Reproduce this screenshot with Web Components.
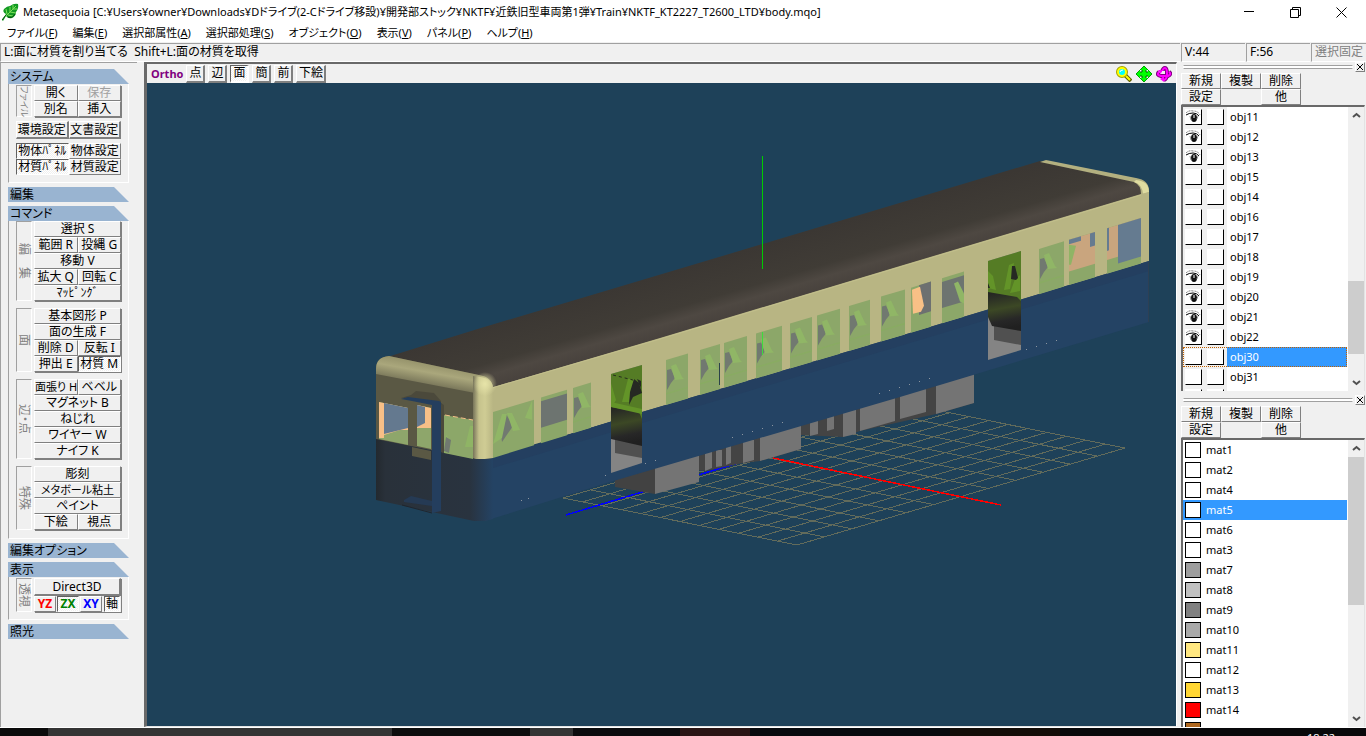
<!DOCTYPE html>
<html lang="ja">
<head>
<meta charset="utf-8">
<title>Metasequoia</title>
<style>
    html, body{
        height: 100%;
        margin: 0;
    }
    body{
        overflow: hidden;
        background: #f0f0f0;
        color: #000;
        font: 12px/14px "Noto Sans", "Noto Sans CJK JP", sans-serif;
        font-feature-settings: "palt";
    }
</style>
</head>
<body>
<meta-app></meta-app>

<script>
// registers an element whose shadow root is cloned from one template
function define(name, html, Base = class extends HTMLElement {}) {
    const tpl = document.createElement("template");
    tpl.innerHTML = html;
    customElements.define(name, class extends Base {
        constructor() {
            super();
            this.attachShadow({ mode: "open" }).append(tpl.content.cloneNode(true));
            if (this.setup) this.setup(this.shadowRoot);
        }
    });
}

define("title-bar", /* html */`
    <style>
        :host{
            display: flex;
            align-items: center;
            height: 24px;
            padding-right: 2px;
            background: #fff;
            font-size: 11px;
        }
        .leaf{
            margin: 0 4px 0 2px;
        }
        h1{
            flex: 1;
            margin: 0;
            font: inherit;
            white-space: nowrap;
        }
        button{
            width: 46px;
            height: 22px;
            padding: 0;
            border: 0;
            background: none;
        }
        svg{
            display: block;
        }
        button svg{
            margin: auto;
            fill: none;
            stroke: #000;
        }
    </style>
    <svg class="leaf" width="17" height="18" viewBox="0 0 17 18">
        <path d="M0 17L4 11Q0 9 2 6Q5 3 8 3Q12 0 16 1Q17 5 14 9Q14 13 10 15Q6 16 4 13L1 18Z" fill="#129a22"/>
        <path d="M3 14L14 3M5 11L4 6M8 9L8 4M11 6L11 2M6 12L11 13M8 9L14 10M11 6L15 6" stroke="#7ee05a" fill="none"/>
        <path d="M0 17L4 12M6 14Q10 16 13 11" stroke="#064f10" fill="none"/>
    </svg>
    <h1><slot></slot></h1>
    <button aria-label="最小化"><svg width="11" height="11"><path d="M0 4.500H10"/></svg></button>
    <button aria-label="元に戻す"><svg width="11" height="11"><path d="M.5 2.500H8.500V10.500H.5ZM2.500 2V.5H10.500V8.500H9"/></svg></button>
    <button aria-label="閉じる"><svg width="11" height="11"><path d="M.5 .5L10.500 10.500M10.500 .5L.5 10.500"/></svg></button>
`);

define("menu-bar", /* html */`
    <style>
        :host{
            display: block;
            background: #fff;
            font-size: 11px;
        }
        nav{
            display: flex;
            gap: 15px;
            height: 18px;
            align-items: center;
            padding-left: 7px;
        }
        button{
            padding: 0;
            border: 0;
            background: none;
            font: inherit;
            font-feature-settings: inherit;
            color: inherit;
            white-space: nowrap;
        }
    </style>
    <nav>
        <button>ファイル(<u>F</u>)</button>
        <button>編集(<u>E</u>)</button>
        <button>選択部属性(<u>A</u>)</button>
        <button>選択部処理(<u>S</u>)</button>
        <button>オブジェクト(<u>O</u>)</button>
        <button>表示(<u>V</u>)</button>
        <button>パネル(<u>P</u>)</button>
        <button>ヘルプ(<u>H</u>)</button>
    </nav>
`);

define("status-bar", /* html */`
    <style>
        :host{
            display: flex;
            gap: 1px;
            height: 19px;
            background: #f0f0f0;
        }
        ::slotted(span){
            box-sizing: border-box;
            width: 64px;
            padding: 1px 3px;
            border-top: 1px solid #a0a0a0;
            border-left: 1px solid #a0a0a0;
            border-bottom: 1px solid #fff;
            white-space: nowrap;
            overflow: hidden;
        }
        ::slotted(.message){
            flex: 1;
        }
        ::slotted(.lock){
            width: 55px;
            color: #808080;
        }
    </style>
    <slot></slot>
`);

define("tool-button", /* html */`
    <style>
        :host{
            display: flex;
            flex: 1 1 0;
            min-width: 0;
        }
        button{
            flex: 1;
            min-width: 0;
            height: 16px;
            padding: 0;
            border: 1px solid;
            border-color: #fff #808080 #808080 #fff;
            background: #f0f0f0;
            font: inherit;
            font-feature-settings: inherit;
            line-height: 14px;
            color: inherit;
            white-space: nowrap;
            overflow: hidden;
        }
        :host([tall]) button{
            height: 18px;
            border-right-width: 2px;
            border-bottom-width: 2px;
        }
        :host([pressed]) button{
            border-color: #606060 #fff #fff #606060;
            background: repeating-conic-gradient(#fff 0 25%, #f0f0f0 0 50%) 0 0 / 2px 2px;
        }
        :host([disabled]) button{
            color: #a0a0a0;
        }
    </style>
    <button><slot></slot></button>
`, class extends HTMLElement {
    setup(root) {
        this.button = root.querySelector("button");
    }
    connectedCallback() {
        this.button.disabled = this.hasAttribute("disabled");
        if (this.hasAttribute("pressed")) this.button.setAttribute("aria-pressed", "true");
    }
});

define("tool-row", /* html */`
    <style>
        :host{
            display: flex;
        }
    </style>
    <slot></slot>
`);

// rows of buttons with a caption turned on its side
define("tool-group", /* html */`
    <style>
        :host{
            display: flex;
            gap: 2px;
        }
        .caption{
            contain: size;
            box-sizing: border-box;
            width: 16px;
            border: 1px solid;
            border-color: #a0a0a0 #fff #fff #a0a0a0;
            writing-mode: vertical-rl;
            text-orientation: sideways;
            text-align: center;
            line-height: 14px;
            color: #808080;
            white-space: pre;
        }
        :host([small]) .caption{
            font-size: 9px;
        }
        .rows{
            flex: 1;
            min-width: 0;
            box-shadow: 1px 1px #808080;
        }
    </style>
    <div class="caption"></div>
    <div class="rows"><slot></slot></div>
`, class extends HTMLElement {
    setup(root) {
        this.caption = root.querySelector(".caption");
    }
    connectedCallback() {
        this.caption.textContent = this.getAttribute("caption");
    }
});

define("tool-section", /* html */`
    <style>
        :host{
            display: block;
            width: 121px;
            margin-bottom: 4px;
        }
        h2{
            height: 15px;
            margin: 0;
            padding-left: 2px;
            background: #99b4d1;
            clip-path: polygon(0 0, 106px 0, 100% 100%, 0 100%);
            font: inherit;
            line-height: 15px;
        }
        .body{
            display: flex;
            flex-direction: column;
            gap: 7px;
            padding: 0 7px 8px;
            border-left: 1px solid #a0a0a0;
            border-right: 1px solid #fff;
            border-bottom: 1px solid #fff;
        }
        :host([closed]) .body{
            display: none;
        }
        :host([tight]) .body{
            gap: 4px;
            padding-top: 1px;
            padding-bottom: 7px;
        }
    </style>
    <h2></h2>
    <div class="body"><slot></slot></div>
`, class extends HTMLElement {
    setup(root) {
        this.heading = root.querySelector("h2");
    }
    connectedCallback() {
        this.heading.textContent = this.getAttribute("heading");
    }
});

define("command-panel", /* html */`
    <style>
        :host{
            display: block;
            box-sizing: border-box;
            width: 137px;
            padding: 6px 0 0 7px;
            border-top: 1px solid #a0a0a0;
            border-left: 1px solid #a0a0a0;
            overflow: hidden;
        }
        .fit{
            font-size: 11px;
        }
        .axes{
            display: flex;
            gap: 1px;
            font-weight: bold;
        }
        .axes tool-button{
            flex: 0 0 22px;
        }
        .axes .axis{
            flex: 0 0 16px;
            margin-left: 1px;
            font-weight: normal;
        }
        .yz{ color: #f00; }
        .zx{ color: #008000; }
        .xy{ color: #00f; }
    </style>
    <tool-section heading="システム" tight>
        <tool-group caption="ファイル" small>
            <tool-row><tool-button>開く</tool-button><tool-button disabled>保存</tool-button></tool-row>
            <tool-row><tool-button>別名</tool-button><tool-button>挿入</tool-button></tool-row>
        </tool-group>
        <tool-row><tool-button tall>環境設定</tool-button><tool-button tall>文書設定</tool-button></tool-row>
        <div>
            <tool-row><tool-button pressed>物体ﾊﾟﾈﾙ</tool-button><tool-button>物体設定</tool-button></tool-row>
            <tool-row><tool-button pressed>材質ﾊﾟﾈﾙ</tool-button><tool-button>材質設定</tool-button></tool-row>
        </div>
    </tool-section>
    <tool-section heading="編集" closed></tool-section>
    <tool-section heading="コマンド">
        <tool-group caption="編　集">
            <tool-row><tool-button>選択 S</tool-button></tool-row>
            <tool-row><tool-button>範囲 R</tool-button><tool-button>投縄 G</tool-button></tool-row>
            <tool-row><tool-button>移動 V</tool-button></tool-row>
            <tool-row><tool-button>拡大 Q</tool-button><tool-button>回転 C</tool-button></tool-row>
            <tool-row><tool-button>ﾏｯﾋﾟﾝｸﾞ</tool-button></tool-row>
        </tool-group>
        <tool-group caption="面">
            <tool-row><tool-button>基本図形 P</tool-button></tool-row>
            <tool-row><tool-button>面の生成 F</tool-button></tool-row>
            <tool-row><tool-button>削除 D</tool-button><tool-button>反転 I</tool-button></tool-row>
            <tool-row><tool-button>押出 E</tool-button><tool-button pressed>材質 M</tool-button></tool-row>
        </tool-group>
        <tool-group caption="辺・点">
            <tool-row><tool-button class="fit">面張り H</tool-button><tool-button>ベベル</tool-button></tool-row>
            <tool-row><tool-button>マグネット B</tool-button></tool-row>
            <tool-row><tool-button>ねじれ</tool-button></tool-row>
            <tool-row><tool-button>ワイヤー W</tool-button></tool-row>
            <tool-row><tool-button>ナイフ K</tool-button></tool-row>
        </tool-group>
        <tool-group caption="特殊">
            <tool-row><tool-button>彫刻</tool-button></tool-row>
            <tool-row><tool-button class="fit">メタボール粘土</tool-button></tool-row>
            <tool-row><tool-button>ペイント</tool-button></tool-row>
            <tool-row><tool-button>下絵</tool-button><tool-button>視点</tool-button></tool-row>
        </tool-group>
    </tool-section>
    <tool-section heading="編集オプション" closed></tool-section>
    <tool-section heading="表示" tight>
        <tool-group caption="透視">
            <tool-row><tool-button tall>Direct3D</tool-button></tool-row>
            <div class="axes">
                <tool-button class="yz">YZ</tool-button><tool-button class="zx" pressed>ZX</tool-button><tool-button class="xy">XY</tool-button><tool-button class="axis" pressed>軸</tool-button>
            </div>
        </tool-group>
    </tool-section>
    <tool-section heading="照光" closed></tool-section>
`);

define("view-toolbar", /* html */`
    <style>
        :host{
            display: flex;
            align-items: center;
            gap: 3px;
            height: 19px;
            padding: 0 4px;
            background: #f0f0f0;
        }
        b{
            color: #800080;
            font-size: 11px;
        }
        tool-button{
            flex: 0 0 19px;
        }
        .wide{
            flex-basis: 30px;
        }
        .icons{
            display: flex;
            gap: 4px;
            margin-left: auto;
        }
        .icons button{
            display: block;
            padding: 0;
            border: 0;
            background: none;
        }
        svg{
            display: block;
        }
    </style>
    <b>Ortho</b>
    <tool-button tall>点</tool-button>
    <tool-button tall>辺</tool-button>
    <tool-button tall pressed>面</tool-button>
    <tool-button tall>簡</tool-button>
    <tool-button tall>前</tool-button>
    <tool-button tall class="wide">下絵</tool-button>
    <div class="icons">
        <button aria-label="拡大"><svg width="16" height="16">
            <path d="M9 9L15 15" stroke="#606000" stroke-width="4"/>
            <path d="M9 9L14 14" stroke="#ff0" stroke-width="2"/>
            <circle cx="6" cy="6" r="5" fill="#0ff" stroke="#a0a000" stroke-width="2"/>
            <circle cx="6" cy="6" r="4" fill="none" stroke="#ff0" stroke-width="2"/>
            <path d="M4 6Q4 4 7 4" stroke="#fff" fill="none"/>
        </svg></button>
        <button aria-label="移動"><svg width="16" height="16">
            <path d="M8 0L16 8L8 16L0 8Z" fill="#0f0" stroke="#00a000"/>
            <path d="M4 4H6V6H4ZM10 4H12V6H10ZM4 10H6V12H4ZM10 10H12V12H10Z" fill="#efe"/>
            <path d="M6 4V6H4M10 4V6H12M4 10H6V12M12 10H10V12" stroke="#006000" fill="none"/>
        </svg></button>
        <button aria-label="回転"><svg width="16" height="16" fill="none">
            <path d="M8 14Q11 13 11 8Q11 2 9 2Q7 2 6 6M3 6Q0 9 5 10H12Q16 8 13 6" stroke="#800080" stroke-width="4"/>
            <path d="M8 14Q11 13 11 8Q11 2 9 2Q7 2 6 6M3 6Q0 9 5 10H12Q16 8 13 6" stroke="#f0f" stroke-width="2"/>
            <path d="M4 13L8 10V16ZM2 4L6 4L5 8Z" fill="#f0f"/>
            <path d="M6 5V8H9V5Z" fill="#f0f0f0"/>
        </svg></button>
    </div>
`);

// the railway car, drawn in window coordinates so that its parts line up
define("scene-view", /* html */`
    <style>
        :host{
            display: block;
            flex: 1;
            min-height: 0;
            background: #1e4159;
        }
        svg{
            display: block;
            width: 100%;
            height: 100%;
        }
    </style>
    <svg viewBox="147 83 1029 643" preserveAspectRatio="xMidYMid slice" role="img" aria-label="body.mqo">
        <defs>
            <linearGradient id="roof" gradientUnits="userSpaceOnUse" x1="700" y1="263" x2="717" y2="321">
                <stop offset="0" stop-color="#3b3733"/><stop offset=".6" stop-color="#403c36"/>
                <stop offset=".8" stop-color="#4e4842"/><stop offset="1" stop-color="#48423d"/>
            </linearGradient>
            <linearGradient id="brow" gradientUnits="userSpaceOnUse" x1="430" y1="364" x2="425" y2="392">
                <stop offset="0" stop-color="#97946c"/><stop offset=".3" stop-color="#aaa77c"/>
                <stop offset="1" stop-color="#5a5844"/>
            </linearGradient>
            <linearGradient id="post">
                <stop offset="0" stop-color="#77745a"/><stop offset=".3" stop-color="#c6c38d"/>
                <stop offset=".6" stop-color="#cfcc94"/><stop offset="1" stop-color="#b8b583"/>
            </linearGradient>
            <radialGradient id="corner"><stop offset="0" stop-color="#e6e3a8"/><stop offset="1" stop-color="#e6e3a8" stop-opacity="0"/></radialGradient>
            <linearGradient id="nose"><stop offset="0" stop-color="#23292f"/><stop offset=".08" stop-color="#29313a"/>
                <stop offset=".8" stop-color="#29333f"/><stop offset="1" stop-color="#244364"/></linearGradient>
            <linearGradient id="dark" x2=".15" y2="1"><stop offset="0" stop-color="#202020"/><stop offset=".2" stop-color="#2a2d25"/>
                <stop offset=".5" stop-color="#3c4825"/><stop offset=".8" stop-color="#272727"/><stop offset="1" stop-color="#202020"/></linearGradient>
        </defs>
        <g id="grid" stroke="#626b5b" shape-rendering="crispEdges"></g>
        <path d="M566 515L738 463" stroke="#00f" stroke-width="1.500" shape-rendering="crispEdges"/>
        <path d="M773 458L1001 505" stroke="#f00" stroke-width="1.500" shape-rendering="crispEdges"/>

        <!-- underfloor boxes -->
        <path d="M615 480L655 462V494L615 487Z" fill="#424242"/>
        <path d="M655 462L699 450V482L655 494Z" fill="#747474"/>
        <path d="M699 455L801 425V449L760 461L743 463L705 471L699 470Z" fill="#444"/>
        <path d="M705 450H712V468L705 471ZM716 450H722V466L716 467ZM726 445H731V463L726 465ZM743 440H754V460L743 463ZM760 436L801 425V449L760 461Z" fill="#747474"/>
        <path d="M801 423L974 370V403L936 414L860 431L843 437L801 435Z" fill="#444"/>
        <path d="M810 420H818V434L810 436ZM827 415H834V429L827 431ZM843 410L856 406V434L843 437ZM860 405L895 395V421L860 431ZM900 395L926 385V412L900 419ZM936 380L974 370V403L936 414Z" fill="#747474"/>

        <!-- roof and long side -->
        <path d="M384 358L476 329.500L776 240L1040 161L1137 182L1146 195L900 268L660 340L490 389Z" fill="url(#roof)"/>
        <path d="M1040 162L1046 160L1136 178Q1149 180 1149 191V230H1141V194Q1141 185 1134 182Z" fill="#b3b080"/>
        <path d="M1136 180Q1149 181 1149 192L1143 194Q1142 184 1134 182Z" fill="#dfdca0"/>
        <path d="M490 388L660 338L900 266L1141 194L1149 192V262L900 337L642 413L480 460Z" fill="#b8b583"/>
        <path d="M492 388L660 339L900 267L1141 195" stroke="#c2bf8c" fill="none"/>
        <path d="M475 459L493 458L642 412L900 336L1149 261V322L900 397L610 482L485 521H474Z" fill="#244364"/>
        <path d="M493 458L642 412L900 336L1149 261V271L900 346L642 423L493 468Z" fill="#243f60"/>
        <path d="M1148.500 262V322" stroke="#2d4054"/>
        <g id="bolts" fill="#8b95a0"></g>
        <g id="windows"></g>

        <!-- doorways -->
        <g>
            <path d="M611 374L642 365V463L611 473Z" fill="#848484"/>
            <path d="M615 436L642 441V458L615 453Z" fill="#505050"/>
            <path d="M611 404L642 409V446L611 439Z" fill="url(#dark)"/>
            <path d="M611 374L642 365V419L639 412L611 407Z" fill="#557c25"/>
            <path d="M611 383L616 400L613 405H611ZM628 379H634L629 402H622ZM611 402L642 409V414L611 407Z" fill="#639428"/>
            <path d="M634 379L639 383L642 393L633 397L629 405L630 392ZM637 379L641 381V388Z" fill="#262923"/>
            <path d="M613 375L633 380" stroke="#252c1d" stroke-dasharray="3 3"/>
        </g>
        <g>
            <path d="M988 261L1021 251V350L988 360Z" fill="#848484"/>
            <path d="M988 300L994 324V340L1021 345V326Z" fill="#505050"/>
            <path d="M988 290L1021 297V331L992 326L988 317Z" fill="url(#dark)"/>
            <path d="M988 261L1021 251V301L1017 297L988 292Z" fill="#557c25"/>
            <path d="M988 271L993 276L996 290L988 288ZM1009 265L1014 263L1010 289L1004 290ZM1015 279L1020 275V291L1010 293Z" fill="#639428"/>
            <path d="M1012 266L1015 266L1018 278L1016 280L1011 279ZM988 283L990 288H988Z" fill="#262923"/>
        </g>

        <!-- front end -->
        <path d="M376 369Q376 357 389 356L479 375Q492 377 493 388V458L475 460L376 440Z" fill="#5a5844"/>
        <path d="M376 369Q376 357 389 356L479 375Q492 377 493 388L475 393L376 374Z" fill="url(#brow)"/>
        <path d="M473 376Q493 377 493 388V458L476 460L473 458Z" fill="url(#post)"/>
        <ellipse cx="485" cy="384" rx="12" ry="12" fill="url(#corner)"/>
        <path d="M376 439L476 459H493V519L485 521L474 521L376 500Z" fill="url(#nose)"/>
        <path d="M379 402L408 408V445L379 439Z" fill="#8ea66b"/>
        <path d="M379 402L408 408V430L400 430L384 435V438L379 438Z" fill="#f7bf87"/>
        <path d="M384 403L408 408V428L400 430L384 434Z" fill="#64798f"/>
        <path d="M417 405L431 408V449L417 446Z" fill="#8ea66b"/>
        <path d="M417 405L431 408V428H417Z" fill="#f7bf87"/>
        <path d="M417 405L425 407V423L417 427Z" fill="#64798f"/>
        <path d="M444 415L473 420V459L444 453Z" fill="#8ca769"/>
        <path d="M446 435L450 440L449 453L444 452ZM470 426H473V447L465 447Z" fill="#8fb465"/>
        <path d="M446 437L451 440L449 453L444 451Z" fill="#717970"/>
        <path d="M445 415L473 420" stroke="#f7bf87" stroke-dasharray="5 3"/>
        <path d="M412 447L431 451V460L412 456Z" fill="#5a5844"/>
        <path d="M411 395L416 391L434 393L441 401V403L401 398Z" fill="#4b493b"/>
        <path d="M441 403L444 405V453L441 452Z" fill="#4b493b"/>
        <path d="M401 399L408 397L439 401Q442 402 441 405V511L432 513V405L412 401Z" fill="#243e5e"/>
        <path d="M404 500L411 496L432 501V506L404 502Z" fill="#253a54"/>
        <path d="M402 505L432 513" stroke="#20262e"/>

        <path d="M762.500 156V269" stroke="#0c0" shape-rendering="crispEdges"/>
        <path d="M762.500 332V355" stroke="#3ddc3d" shape-rendering="crispEdges"/>
        <path d="M719.500 363V385" stroke="#2a4248"/>
    </svg>
`, class extends HTMLElement {
    setup(root) {
        const L = [563, 498], B = [797, 545], T = [891, 401], n = 12;
        let lines = "";
        for (let i = 0; i <= n; i++) {
            const k = i / n;
            const a = [(B[0] - L[0]) * k, (B[1] - L[1]) * k];
            const b = [(T[0] - L[0]) * k, (T[1] - L[1]) * k];
            lines += `M${L[0] + a[0]} ${L[1] + a[1]}L${T[0] + a[0]} ${T[1] + a[1]}`;
            lines += `M${L[0] + b[0]} ${L[1] + b[1]}L${B[0] + b[0]} ${B[1] + b[1]}`;
        }
        root.querySelector("#grid").innerHTML = `<path d="${lines}"/>`;

        const bolts = [[491, 509], [521, 500], [528, 498], [605, 475], [645, 463], [655, 460], [732, 437],
            [742, 434], [752, 431], [762, 428], [772, 425], [782, 422], [879, 393], [889, 390], [899, 387],
            [909, 384], [919, 381], [929, 378], [1026, 349], [1036, 346], [1046, 343], [1056, 340]];
        root.querySelector("#bolts").innerHTML = bolts.map(([x, y]) =>
            `<rect x="${x}" y="${y}" width="1" height="1"/>`).join("");

        // upper and lower window lines run along the car side
        const along = (pts, x) => {
            let i = 1;
            while (i < pts.length - 1 && pts[i][0] < x) i++;
            const [p, q] = [pts[i - 1], pts[i]];
            return p[1] + (q[1] - p[1]) * (x - p[0]) / (q[0] - p[0]);
        };
        const top = x => along([[493, 412], [666, 360], [900, 291], [1141, 218]], x);
        const sill = x => along([[493, 458], [642, 412], [900, 336], [1149, 261]], x);
        const panes = [[493, 534, "long"], [541, 567, "wall"], [573, 591], [666, 688], [700, 720], [724, 747], [756, 782],
            [790, 812], [817, 840], [849, 870], [881, 905], [911, 931, "sun"], [942, 964, "wall"],
            [1039, 1064], [1069, 1095, "end"], [1107, 1141, "end"]];
        let out = "";
        for (const [l, r, kind] of panes) {
            const t = top(l), u = top(r);
            const quad = (a, b, y1, y2, fill) => {
                const h = x => sill(x) - top(x);
                return `<path fill="${fill}" d="M${a} ${top(a) + h(a) * y1}L${b} ${top(b) + h(b) * y1}V${top(b) + h(b) * y2}L${a} ${top(a) + h(a) * y2}Z"/>`;
            };
            out += quad(l, r, 0, 1, "#8ca769");
            if (kind === "end") {
                out += quad(l, r, 0, .7, "#c9a57e");
                out += l > 1100 ? quad(l + 11, r, 0, .85, "#657b90") + quad(l, l + 2, 0, .5, "#657b90")
                    : quad(l, l + 12, 0, .1, "#657b90") + quad(r - 5, r, 0, .3, "#657b90");
                if (l < 1100) out += `<path fill="#8fb465" d="M${l} ${t + 5}L${l + 7} ${t + 6}L${l + 2} ${t + 25}H${l}Z"/>`;
                continue;
            }
            if (kind === "sun") {
                out += quad(l + 8, r, 0, .66, "#6d7070");
                out += `<path fill="#f9c086" d="M${l + 1} ${t + 2}L${l + 9} ${t - 1}L${l + 13} ${t + 18}L${l + 10} ${t + 24}L${l + 2} ${t + 26}Z"/>`;
                continue;
            }
            if (kind === "wall") {
                out += quad(l, r, .08, .66, "#6d7470");
                if (l > 900) out += `<path fill="#90b666" d="M${r - 10} ${u + 12}L${r - 6} ${u + 10}L${r} ${u + 22}V${u + 32}L${r - 4} ${u + 30}Z"/>`;
                continue;
            }
            if (kind === "long") {
                out += `<path fill="#717970" d="M${l + 13} ${t + 2}L${l + 20} ${t + 14}L${l + 9} ${t + 30}L${l + 8} ${t + 22}Z"/>`;
                out += `<path fill="#90b666" d="M${l} ${t + 32}L${l + 9} ${t + 2}H${l + 14}L${l + 9} ${t + 26}ZM${l + 14} ${t + 1}H${l + 19}L${l + 27} ${t + 18}L${l + 20} ${t + 19}ZM${r - 9} ${u + 18}L${r - 2} ${u + 1}V${u + 20}Z"/>`;
                continue;
            }
            // seat in shade with the lit back of the next one
            out += `<path fill="#717970" d="M${l + 1} ${t + 10}L${l + 5} ${t + 9}L${l + 9} ${t + 18}L${l + 5} ${t + 23}L${l + 1} ${t + 30}Z"/>`;
            out += `<path fill="#90b666" d="M${l + 5} ${t + 6}L${l + 10} ${t + 4}L${l + 16} ${t + 17}L${Math.min(l + 18, r)} ${t + 19}L${l + 9} ${t + 20}Z"/>`;
            out += quad(l, r, .74, .77, "#89ac62");
        }
        root.querySelector("#windows").innerHTML = out;
    }
});

define("scroll-bar", /* html */`
    <style>
        :host{
            display: flex;
            flex-direction: column;
            width: 16px;
            background: #f0f0f0;
        }
        button{
            height: 17px;
            padding: 0;
            border: 0;
            background: none;
        }
        svg{
            display: block;
            margin: auto;
            fill: none;
            stroke: #505050;
            stroke-width: 2;
        }
        .track{
            display: flex;
            flex: 1;
            flex-direction: column;
        }
        .before{
            flex: var(--before, 0) 0 0;
        }
        .thumb{
            flex: var(--thumb, 1) 0 0;
            background: #cdcdcd;
        }
        .after{
            flex: var(--after, 1) 0 0;
        }
    </style>
    <button aria-label="上へ"><svg width="9" height="7"><path d="M1 5L4.500 2L8 5"/></svg></button>
    <div class="track"><div class="before"></div><div class="thumb"></div><div class="after"></div></div>
    <button aria-label="下へ"><svg width="9" height="7"><path d="M1 2L4.500 5L8 2"/></svg></button>
`);

define("object-row", /* html */`
    <style>
        :host{
            display: flex;
            height: 20px;
        }
        .checks{
            display: flex;
            gap: 5px;
            width: 42px;
            padding: 2px 0 0 2px;
            background: #f0f0f0;
        }
        label{
            display: grid;
            width: 17px;
            height: 16px;
        }
        input, svg{
            grid-area: 1 / 1;
        }
        input{
            appearance: none;
            width: 17px;
            height: 16px;
            margin: 0;
            background: #fff;
            border: 1px solid;
            border-color: #fff #000 #000 #fff;
        }
        svg{
            visibility: hidden;
        }
        input:checked + svg{
            visibility: visible;
        }
        .name{
            flex: 1;
            padding-left: 3px;
            line-height: 20px;
        }
        :host([selected]){
            outline: 1px dotted #c06000;
            outline-offset: -1px;
        }
        :host([selected]) .name{
            background: #39f;
            color: #fff;
        }
    </style>
    <div class="checks">
        <label><input type="checkbox" class="shown" aria-label="表示">
            <svg width="16" height="15">
                <path d="M1 4Q4 1 8 2Q13 2 15 6" fill="none" stroke="#777" stroke-dasharray="2 1"/>
                <path d="M1 6Q4 4 8 4Q12 4 14 7" fill="none" stroke="#000"/>
                <ellipse cx="9" cy="9" rx="3" ry="4" fill="#111"/>
                <path d="M9 6V9" stroke="#fff"/>
                <path d="M5 7L6 11M13 7L12 10" stroke="#999"/>
            </svg>
        </label>
        <label><input type="checkbox" aria-label="ロック"></label>
    </div>
    <div class="name"><slot></slot></div>
`, class extends HTMLElement {
    connectedCallback() {
        this.shadowRoot.querySelector(".shown").checked = this.hasAttribute("shown");
    }
});

define("material-row", /* html */`
    <style>
        :host{
            display: flex;
            align-items: center;
            gap: 5px;
            height: 20px;
            padding-left: 2px;
        }
        .swatch{
            box-sizing: border-box;
            width: 16px;
            height: 16px;
            border: 1px solid #000;
            background: var(--swatch, #fff);
        }
        :host([selected]){
            background: #39f;
            color: #fff;
        }
    </style>
    <div class="swatch"></div>
    <slot></slot>
`);

define("list-panel", /* html */`
    <style>
        :host{
            display: flex;
            flex-direction: column;
            min-height: 0;
            font-size: 11px;
        }
        .grip{
            display: flex;
            align-items: center;
            gap: 2px;
            height: 10px;
            padding: 0 1px 0 2px;
        }
        .bars{
            flex: 1;
            height: 2px;
            border: 1px solid;
            border-color: #a0a0a0 #fff;
            background: #fff;
        }
        .grip button{
            width: 10px;
            height: 10px;
            padding: 0;
            border: 1px solid;
            border-color: #fff #808080 #808080 #fff;
            background: #f0f0f0;
        }
        svg{
            display: block;
        }
        .tools{
            display: grid;
            grid-template-columns: repeat(3, 40px);
            padding-top: 1px;
            font-size: 12px;
        }
        .last{
            grid-column: 3;
        }
        .frame{
            display: flex;
            flex: 1;
            min-height: 0;
            margin-right: 1px;
            border: solid #696969;
            border-width: 2px 1px 0 2px;
            border-right-color: #e3e3e3;
            background: #fff;
        }
        .rows{
            flex: 1;
            margin-right: 1px;
            overflow: hidden;
        }
    </style>
    <div class="grip"><div class="bars"></div><button aria-label="閉じる"><svg width="8" height="8"><path d="M1 1L7 7M7 1L1 7" stroke="#000"/></svg></button></div>
    <div class="tools">
        <tool-button>新規</tool-button>
        <tool-button>複製</tool-button>
        <tool-button>削除</tool-button>
        <tool-button>設定</tool-button>
        <tool-button class="last">他</tool-button>
    </div>
    <div class="frame">
        <div class="rows"><slot></slot></div>
        <scroll-bar></scroll-bar>
    </div>
`);

define("task-bar", /* html */`
    <style>
        :host{
            display: flex;
            justify-content: flex-end;
            box-sizing: border-box;
            height: 9px;
            padding: 3px 31px 0 0;
            overflow: hidden;
            border-top: 1px solid #fff;
            background: linear-gradient(90deg, #0b0b0b 48px, #343434 0 392px, #0d0d0d 0 530px, #343434 0 573px, #0b0b0d 0 680px, #2a1414 0 750px, #07090d 0 950px, #140d08 0 1060px, #08080a 0);
            color: #fff;
            font-size: 11px;
        }
    </style>
    <span>18:22</span>
`);

define("meta-app", /* html */`
    <style>
        :host{
            display: flex;
            flex-direction: column;
            height: 100%;
        }
        title-bar, menu-bar, status-bar, task-bar{
            flex: none;
        }
        menu-bar{
            border-bottom: 1px solid #f0f0f0;
        }
        main{
            display: flex;
            flex: 1;
            min-height: 0;
        }
        .view{
            display: flex;
            flex: 1;
            flex-direction: column;
            min-width: 0;
            margin-left: 7px;
            border: solid #696969;
            border-width: 2px 1px 1px 3px;
            border-right-color: #fff;
            border-bottom-color: #e3e3e3;
        }
        aside{
            display: flex;
            flex-direction: column;
            gap: 4px;
            width: 185px;
            margin-left: 4px;
        }
        .objects{
            flex: 329 0 0;
            --before: 157;
            --thumb: 73;
            --after: 20;
        }
        .materials{
            flex: 332 0 0;
            --before: 0;
            --thumb: 147;
            --after: 105;
        }
    </style>
    <title-bar>Metasequoia [C:¥Users¥owner¥Downloads¥Dドライブ(2-Cドライブ移設)¥開発部ストック¥NKTF¥近鉄旧型車両第1弾¥Train¥NKTF_KT2227_T2600_LTD¥body.mqo]</title-bar>
    <menu-bar></menu-bar>
    <status-bar>
        <span class="message">L:面に材質を割り当てる&nbsp; Shift+L:面の材質を取得</span>
        <span>V:44</span>
        <span>F:56</span>
        <span class="lock">選択固定</span>
    </status-bar>
    <main>
        <command-panel></command-panel>
        <section class="view">
            <view-toolbar></view-toolbar>
            <scene-view></scene-view>
        </section>
        <aside>
            <list-panel class="objects">
                <object-row shown>obj11</object-row>
                <object-row shown>obj12</object-row>
                <object-row shown>obj13</object-row>
                <object-row>obj15</object-row>
                <object-row>obj14</object-row>
                <object-row>obj16</object-row>
                <object-row>obj17</object-row>
                <object-row>obj18</object-row>
                <object-row shown>obj19</object-row>
                <object-row shown>obj20</object-row>
                <object-row shown>obj21</object-row>
                <object-row shown>obj22</object-row>
                <object-row selected>obj30</object-row>
                <object-row>obj31</object-row>
                <object-row></object-row>
            </list-panel>
            <list-panel class="materials">
                <material-row>mat1</material-row>
                <material-row>mat2</material-row>
                <material-row>mat4</material-row>
                <material-row selected>mat5</material-row>
                <material-row>mat6</material-row>
                <material-row>mat3</material-row>
                <material-row style="--swatch: #9d9d9d">mat7</material-row>
                <material-row style="--swatch: #c1c1c1">mat8</material-row>
                <material-row style="--swatch: #808080">mat9</material-row>
                <material-row style="--swatch: #a9a9a9">mat10</material-row>
                <material-row style="--swatch: #ffe780">mat11</material-row>
                <material-row>mat12</material-row>
                <material-row style="--swatch: #ffd633">mat13</material-row>
                <material-row style="--swatch: #f00">mat14</material-row>
                <material-row style="--swatch: #b06820"></material-row>
            </list-panel>
        </aside>
    </main>
    <task-bar></task-bar>
`);
</script>
</body>
</html>
